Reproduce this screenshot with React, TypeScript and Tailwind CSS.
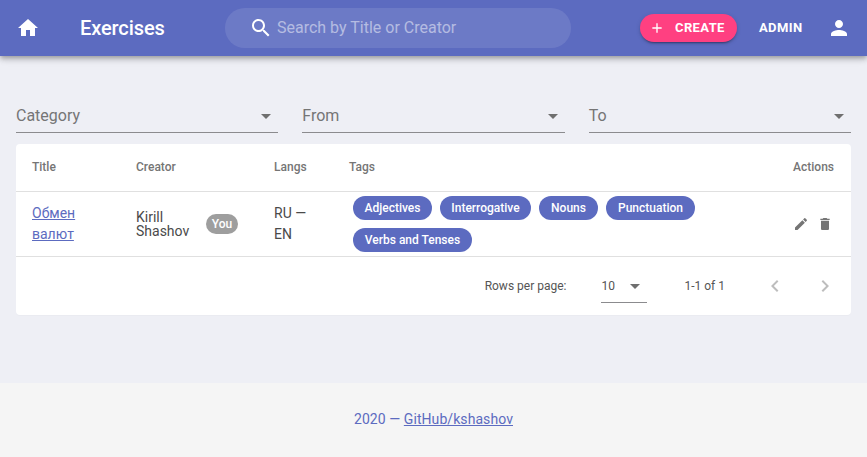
const tags = [
  { label: "Adjectives", width: "w-[79px]" },
  { label: "Interrogative", width: "w-[91px]" },
  { label: "Nouns", width: "w-[59px]" },
  { label: "Punctuation", width: "w-[89px]" },
  { label: "Verbs and Tenses", width: "w-[119px]" },
];

function Icon({ d, className }: { d: string; className: string }) {
  return (
    <svg viewBox="0 0 24 24" fill="currentColor" className={className}>
      <path d={d} />
    </svg>
  );
}

const dropDown = "M7 10l5 5 5-5z";

function Filter({ label }: { label: string }) {
  return (
    <div className="flex h-[34px] flex-1 items-center justify-between border-b border-[#8b8b8e] text-[#757575]">
      <span className="text-base">{label}</span>
      <Icon d={dropDown} className="h-6 w-6 text-[#6f6f6f]" />
    </div>
  );
}

export default function App() {
  return (
    <div className="flex h-[457px] flex-col overflow-hidden bg-[#eeeff5] font-['Roboto',sans-serif]">
      {/* Top bar */}
      <header className="relative z-10 flex h-14 shrink-0 items-center bg-[#5c6bc0] pl-4 pr-4 text-white shadow-[0_2px_4px_-1px_rgba(0,0,0,0.2),0_4px_5px_0_rgba(0,0,0,0.14),0_1px_10px_0_rgba(0,0,0,0.12)]">
        <Icon d="M10 20v-6h4v6h5v-8h3L12 3 2 12h3v8z" className="h-6 w-6" />
        <h1 className="ml-10 w-[145px] text-xl font-medium tracking-[-0.005em]">Exercises</h1>
        <div className="flex h-10 w-[346px] items-center rounded-[20px] bg-white/10 pl-6">
          <Icon
            d="M15.5 14h-.79l-.28-.27C15.41 12.59 16 11.11 16 9.5 16 5.91 13.09 3 9.5 3S3 5.91 3 9.5 5.91 16 9.5 16c1.61 0 3.09-.59 4.23-1.57l.27.28v.79l5 4.99L20.49 19l-4.99-5zm-6 0C7.01 14 5 11.99 5 9.5S7.01 5 9.5 5 14 7.01 14 9.5 11.99 14 9.5 14z"
            className="h-6 w-6"
          />
          <span className="ml-1 text-base text-white/50">Search by Title or Creator</span>
        </div>
        <button className="ml-[69px] flex h-7 w-[97px] items-center rounded-full bg-[#ff4081] pl-[9px] text-[13px] font-bold tracking-[0.03em] shadow-[0_3px_1px_-2px_rgba(0,0,0,0.2),0_2px_2px_0_rgba(0,0,0,0.14),0_1px_5px_0_rgba(0,0,0,0.12)]">
          <Icon d="M19 13h-6v6h-2v-6H5v-2h6V5h2v6h6v2z" className="h-4 w-4" />
          <span className="ml-[10px]">CREATE</span>
        </button>
        <span className="ml-[22px] text-[13px] font-bold tracking-[0.03em]">ADMIN</span>
        <Icon
          d="M12 12c2.21 0 4-1.79 4-4s-1.79-4-4-4-4 1.79-4 4 1.79 4 4 4zm0 2c-2.67 0-8 1.34-8 4v2h16v-2c0-2.66-5.33-4-8-4z"
          className="ml-auto h-6 w-6"
        />
      </header>

      {/* Main content */}
      <main className="flex-1 px-4 pt-[43px]">
        <div className="flex gap-6">
          <Filter label="Category" />
          <Filter label="From" />
          <Filter label="To" />
        </div>

        <section className="mt-[11px] rounded bg-white text-[#4a4a4a] shadow-[0_1px_1px_rgba(0,0,0,0.02)]">
          <div className="flex h-12 items-center border-b border-[#e0e0e0] pb-[2px] pl-4 pr-[17px] text-xs font-medium text-[#757575]">
            <span className="w-[104px]">Title</span>
            <span className="w-[138px]">Creator</span>
            <span className="w-[75px]">Langs</span>
            <span className="flex-1">Tags</span>
            <span>Actions</span>
          </div>

          <div className="flex h-[65px] items-center border-b border-[#e0e0e0] pl-4 pr-[18px] text-sm">
            <a href="#" className="w-[104px] leading-[21px] text-[#5c6bc0] underline">
              Обмен<br />валют
            </a>
            <div className="flex w-[138px] items-center">
              <span className="w-[70px] leading-[14px]">Kirill Shashov</span>
              <span className="flex h-5 w-8 items-center justify-center rounded-full bg-[#9e9e9e] text-xs font-medium text-white">
                You
              </span>
            </div>
            <span className="w-[75px] leading-[21px]">RU —<br />EN</span>
            <div className="flex w-[375px] flex-wrap gap-2 pl-1">
              {tags.map((tag) => (
                <span
                  key={tag.label}
                  className={`flex h-6 items-center justify-center rounded-full bg-[#5c6bc0] text-xs font-medium text-white ${tag.width}`}
                >
                  {tag.label}
                </span>
              ))}
            </div>
            <div className="ml-auto flex items-center gap-2 text-[#757575]">
              <Icon
                d="M3 17.25V21h3.75L17.81 9.94l-3.75-3.75L3 17.25zM20.71 7.04c.39-.39.39-1.02 0-1.41l-2.34-2.34a.9959.9959 0 0 0-1.41 0l-1.83 1.83 3.75 3.75 1.83-1.83z"
                className="h-4 w-4"
              />
              <Icon d="M6 19c0 1.1.9 2 2 2h8c1.1 0 2-.9 2-2V7H6v12zM19 4h-3.5l-1-1h-5l-1 1H5v2h14V4z" className="h-4 w-4" />
            </div>
          </div>

          <div className="flex h-[58px] items-center justify-end text-xs text-[#555555]">
            <span>Rows per page:</span>
            <div className="ml-[35px] flex h-[33px] w-[46px] items-center justify-between border-b border-[#8b8b8e] pt-px">
              <span>10</span>
              <Icon d={dropDown} className="h-6 w-6 text-[#6f6f6f]" />
            </div>
            <span className="ml-[37px]">1-1 of 1</span>
            <Icon d="M15.41 7.41L14 6l-6 6 6 6 1.41-1.41L10.83 12z" className="ml-[38px] h-6 w-6 text-[#bdbdbd]" />
            <Icon d="M10 6L8.59 7.41 13.17 12l-4.58 4.59L10 18l6-6z" className="ml-[26px] mr-[14px] h-6 w-6 text-[#bdbdbd]" />
          </div>
        </section>
      </main>

      {/* Footer */}
      <footer className="flex h-[74px] shrink-0 items-center justify-center bg-[#f5f5f5] pb-[2px] text-sm tracking-[0.005em] text-[#5c6bc0]">
        <span>
          2020 — <a href="#" className="underline">GitHub/kshashov</a>
        </span>
      </footer>
    </div>
  );
}
